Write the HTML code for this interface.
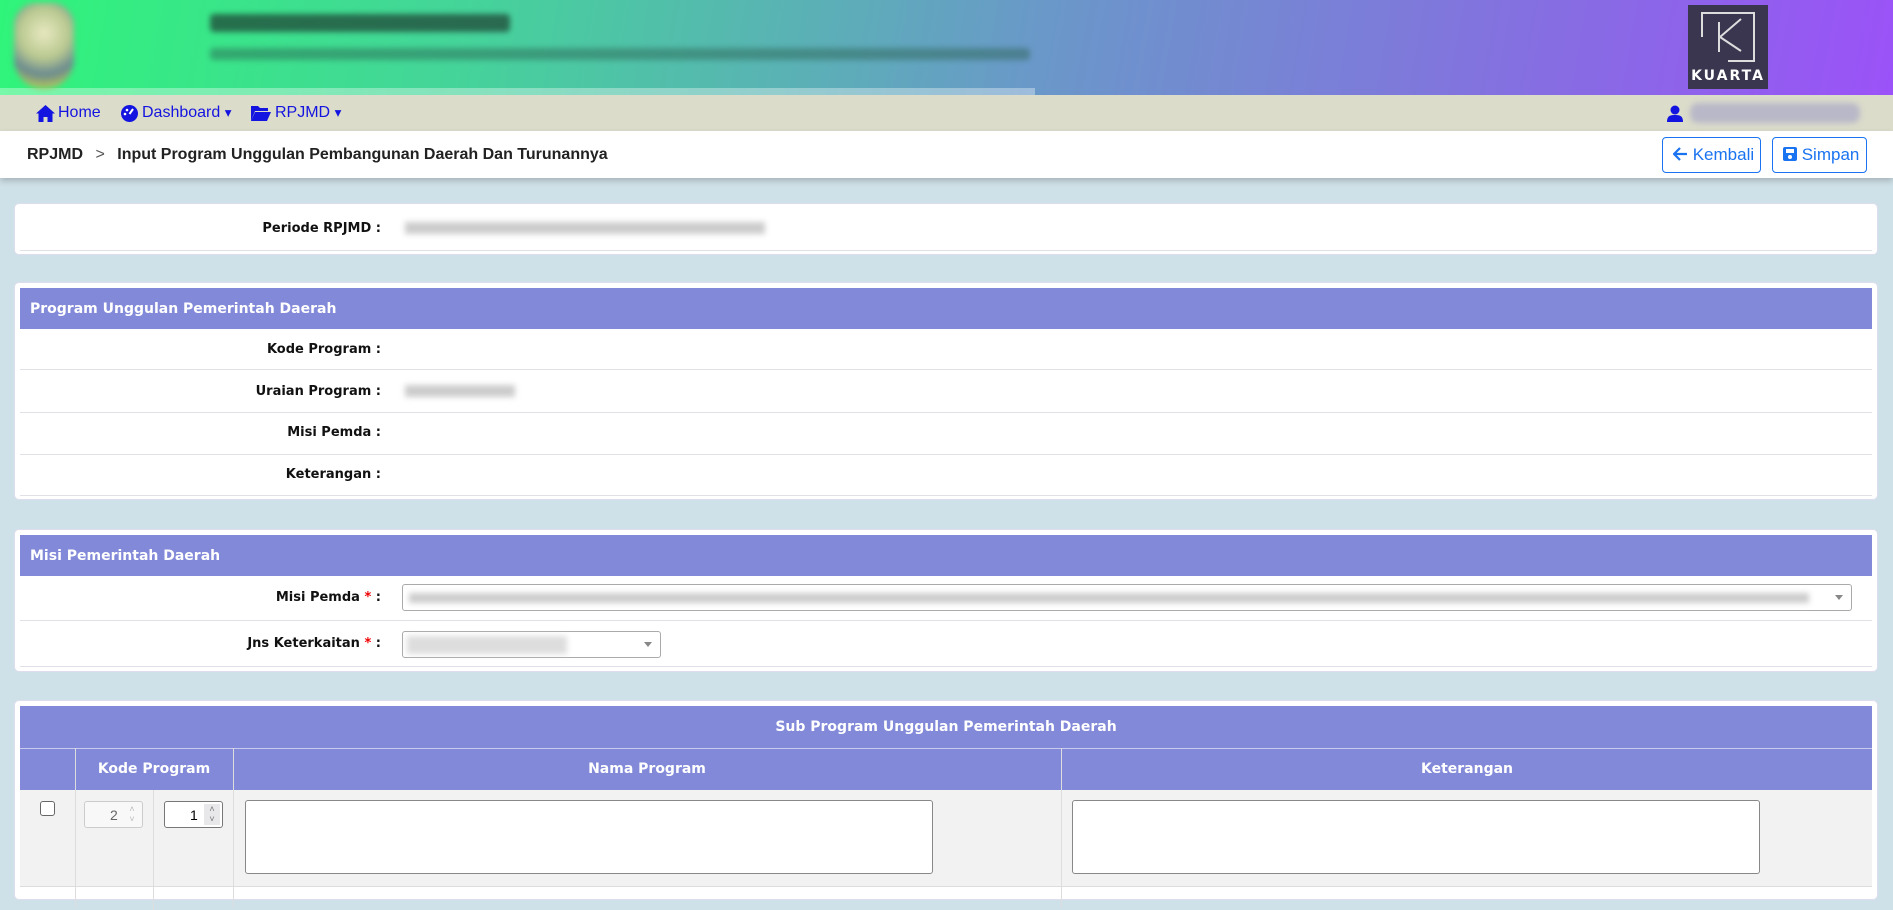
<!DOCTYPE html>
<html><head><meta charset="utf-8"><style>
*{box-sizing:border-box;margin:0;padding:0}
body{width:1893px;height:889px;overflow:hidden;background:#cfe1e8;font-family:"Liberation Sans",sans-serif;position:relative}
.abs{position:absolute}
.hdr{left:0;top:0;width:1893px;height:95px;background:linear-gradient(100deg,#2ff57a 0%,#45d39a 25%,#6a98c9 55%,#8470e0 80%,#9b52f8 100%)}
.blur{filter:blur(3px)}
.nav{left:0;top:95px;width:1893px;height:36px;background:#dcdccb}
.nav span{position:absolute;top:9px;color:#1414e0;font-size:16px}
.bc{left:0;top:131px;width:1893px;height:47px;background:#fff;box-shadow:0 3px 6px rgba(0,0,0,.2)}
.btn{position:absolute;top:137px;height:36px;border:1px solid #1a73f0;border-radius:4px;color:#1a73f0;font-size:17px;padding:7px 0 0 10px;background:#fff;white-space:nowrap}
.card{position:absolute;left:14px;width:1864px;background:#fff;border-radius:5px;border:1px solid #dde}
.band{position:absolute;left:5px;right:5px;background:#8289d9;color:#fff;font:bold 14px "DejaVu Sans",sans-serif}
.lbl{position:absolute;right:1496px;font:bold 13px "DejaVu Sans",sans-serif;color:#111;white-space:nowrap}
.line{position:absolute;left:5px;right:5px;height:1px;background:#dfe1e6}
.red{color:#e00}
.sel{position:absolute;border:1px solid #aaa;border-radius:3px;background:#fff}
.arr{position:absolute;right:8px;top:10px;width:0;height:0;border-left:4px solid transparent;border-right:4px solid transparent;border-top:5px solid #888}
</style></head><body>
<div class="abs hdr"></div>
<div class="abs" style="left:0;top:88px;width:1035px;height:8px;background:rgba(255,255,255,.35)"></div>
<div class="abs blur" style="left:14px;top:3px;width:60px;height:86px;border-radius:30px 30px 40px 40px;background:radial-gradient(circle at 50% 35%,#e8e8c0 0,#b8c890 40%,#6a8a90 65%,#b0c060 85%,transparent 95%)"></div>
<div class="abs blur" style="left:210px;top:14px;width:300px;height:18px;background:#204838;opacity:.75;border-radius:4px"></div>
<div class="abs blur" style="left:210px;top:48px;width:820px;height:12px;background:#2a6050;opacity:.45;border-radius:4px"></div>
<div class="abs" style="left:1688px;top:5px;width:80px;height:84px;background:#3a3650">
 <svg width="80" height="84" style="position:absolute;left:0;top:0"><path d="M14 32V8H66V56H40" stroke="#ddd" stroke-width="2" fill="none"/><path d="M31 17V47M32 32L53 14M32 32L53 46" stroke="#ddd" stroke-width="2" fill="none"/></svg>
 <div style="position:absolute;left:0;width:80px;top:63px;text-align:center;color:#fff;font:bold 14px 'DejaVu Sans',sans-serif;letter-spacing:2px">KUARTA</div>
</div>
<div class="abs nav">
 <svg style="position:absolute;left:36px;top:10px" width="19" height="17" viewBox="0 0 19 17"><path d="M9.5 0L0 8.5h2.5V17h5v-5h4v5h5V8.5H19z" fill="#1414e0"/></svg>
 <span style="left:58px">Home</span>
 <svg style="position:absolute;left:121px;top:10px" width="17" height="17"><circle cx="8.5" cy="8.5" r="8.5" fill="#1414e0"/><path d="M8.5 9L12 4" stroke="#fff" stroke-width="2"/><circle cx="4" cy="9" r="1.3" fill="#fff"/><circle cx="6" cy="5" r="1.3" fill="#fff"/></svg>
 <span style="left:142px">Dashboard <small>▾</small></span>
 <svg style="position:absolute;left:251px;top:11px" width="20" height="15"><path d="M0 0h7l2 2h8v3H4L0 15z" fill="#1414e0"/><path d="M4 6h16l-4 9H0z" fill="#1414e0"/></svg>
 <span style="left:275px">RPJMD <small>▾</small></span>
 <svg style="position:absolute;left:1667px;top:10px" width="16" height="17"><circle cx="8" cy="5" r="4.5" fill="#1414e0"/><path d="M0 17c0-6 3-7 8-7s8 1 8 7z" fill="#1414e0"/></svg>
 <div class="blur" style="position:absolute;left:1690px;top:8px;width:170px;height:20px;background:#b8b8c8;border-radius:8px"></div>
</div>
<div class="abs bc">
 <div style="position:absolute;left:27px;top:15px;font:bold 16px 'Liberation Sans',sans-serif;color:#222">RPJMD <span style="font-weight:normal;color:#555;margin:0 8px">&gt;</span> Input Program Unggulan Pembangunan Daerah Dan Turunannya</div>
</div>
<div class="btn" style="left:1662px;width:99px"><svg width="15" height="14" style="vertical-align:-1px"><path d="M14 7H2M7 1L1 7l6 6" stroke="#1a73f0" stroke-width="2.2" fill="none"/></svg> Kembali</div>
<div class="btn" style="left:1772px;width:95px"><svg width="14" height="14" style="vertical-align:-1px"><rect width="14" height="14" rx="2" fill="#1a73f0"/><rect x="3" y="2" width="8" height="4" fill="#fff"/><circle cx="7" cy="10" r="2" fill="#fff"/></svg> Simpan</div>

<div class="card" style="top:203px;height:52px">
 <div class="lbl" style="top:17px">Periode RPJMD :</div>
 <div class="blur" style="position:absolute;left:390px;top:18px;width:360px;height:12px;background:#ccc"></div>
 <div class="line" style="top:46px"></div>
</div>

<div class="card" style="top:282px;height:218px">
 <div class="band" style="top:5px;height:41px;padding:13px 0 0 10px">Program Unggulan Pemerintah Daerah</div>
 <div class="lbl" style="top:59px">Kode Program :</div>
 <div class="line" style="top:86px"></div>
 <div class="lbl" style="top:101px">Uraian Program :</div>
 <div class="blur" style="position:absolute;left:390px;top:102px;width:110px;height:12px;background:#ccc"></div>
 <div class="line" style="top:129px"></div>
 <div class="lbl" style="top:142px">Misi Pemda :</div>
 <div class="line" style="top:171px"></div>
 <div class="lbl" style="top:184px">Keterangan :</div>
 <div class="line" style="top:212px"></div>
</div>

<div class="card" style="top:529px;height:143px">
 <div class="band" style="top:5px;height:41px;padding:13px 0 0 10px">Misi Pemerintah Daerah</div>
 <div class="lbl" style="top:60px">Misi Pemda <span class="red">*</span> :</div>
 <div class="sel" style="left:387px;top:54px;width:1450px;height:27px"><div class="blur" style="position:absolute;left:6px;top:8px;width:1400px;height:10px;background:#ccc"></div><div class="arr"></div></div>
 <div class="line" style="top:90px"></div>
 <div class="lbl" style="top:106px">Jns Keterkaitan <span class="red">*</span> :</div>
 <div class="sel" style="left:387px;top:101px;width:259px;height:27px"><div class="blur" style="position:absolute;left:4px;top:4px;width:160px;height:18px;background:#ddd"></div><div class="arr"></div></div>
 <div class="line" style="top:136px"></div>
</div>

<div class="card" style="top:700px;height:200px">
 <div class="band" style="top:5px;height:42px;text-align:center;padding-top:13px">Sub Program Unggulan Pemerintah Daerah</div>
 <div class="band" style="top:47px;height:42px;border-top:1px solid #c8cbee"></div>
 <div style="position:absolute;left:5px;right:5px;top:89px;height:96px;background:#f2f2f2"></div>
 <div style="position:absolute;left:5px;right:5px;top:185px;height:1px;background:#ddd"></div>
 <div style="position:absolute;left:60px;top:47px;width:1px;height:160px;background:#ddd"></div>
 <div style="position:absolute;left:218px;top:47px;width:1px;height:160px;background:#ddd"></div>
 <div style="position:absolute;left:1046px;top:47px;width:1px;height:160px;background:#ddd"></div>
 <div style="position:absolute;left:138px;top:89px;width:1px;height:120px;background:#ddd"></div>
 <div class="band" style="top:60px;left:60px;right:auto;width:158px;text-align:center;background:none">Kode Program</div>
 <div class="band" style="top:60px;left:218px;right:auto;width:828px;text-align:center;background:none">Nama Program</div>
 <div class="band" style="top:60px;left:1046px;right:auto;width:812px;text-align:center;background:none">Keterangan</div>
 <div style="position:absolute;left:25px;top:100px;width:15px;height:15px;border:1px solid #666;border-radius:3px;background:#fff"></div>
 <div style="position:absolute;left:69px;top:100px;width:59px;height:27px;border:1px solid #ccc;border-radius:3px;background:#f8f8f8;font-size:14px;color:#666;padding:5px 0 0 25px">2<span style="position:absolute;right:2px;top:2px;width:16px;height:21px;color:#bbb;font-size:9px;line-height:10px;text-align:center">˄<br>˅</span></div>
 <div style="position:absolute;left:149px;top:100px;width:59px;height:27px;border:1px solid #777;border-radius:3px;background:#fff;font-size:14px;color:#000;padding:5px 0 0 25px">1<span style="position:absolute;right:2px;top:2px;width:16px;height:21px;background:#e8e8ea;color:#777;font-size:9px;line-height:10px;text-align:center">˄<br>˅</span></div>
 <div style="position:absolute;left:230px;top:99px;width:688px;height:74px;border:1px solid #888;border-radius:3px;background:#fff"></div>
 <div style="position:absolute;left:1057px;top:99px;width:688px;height:74px;border:1px solid #888;border-radius:3px;background:#fff"></div>
</div>
</body></html>
